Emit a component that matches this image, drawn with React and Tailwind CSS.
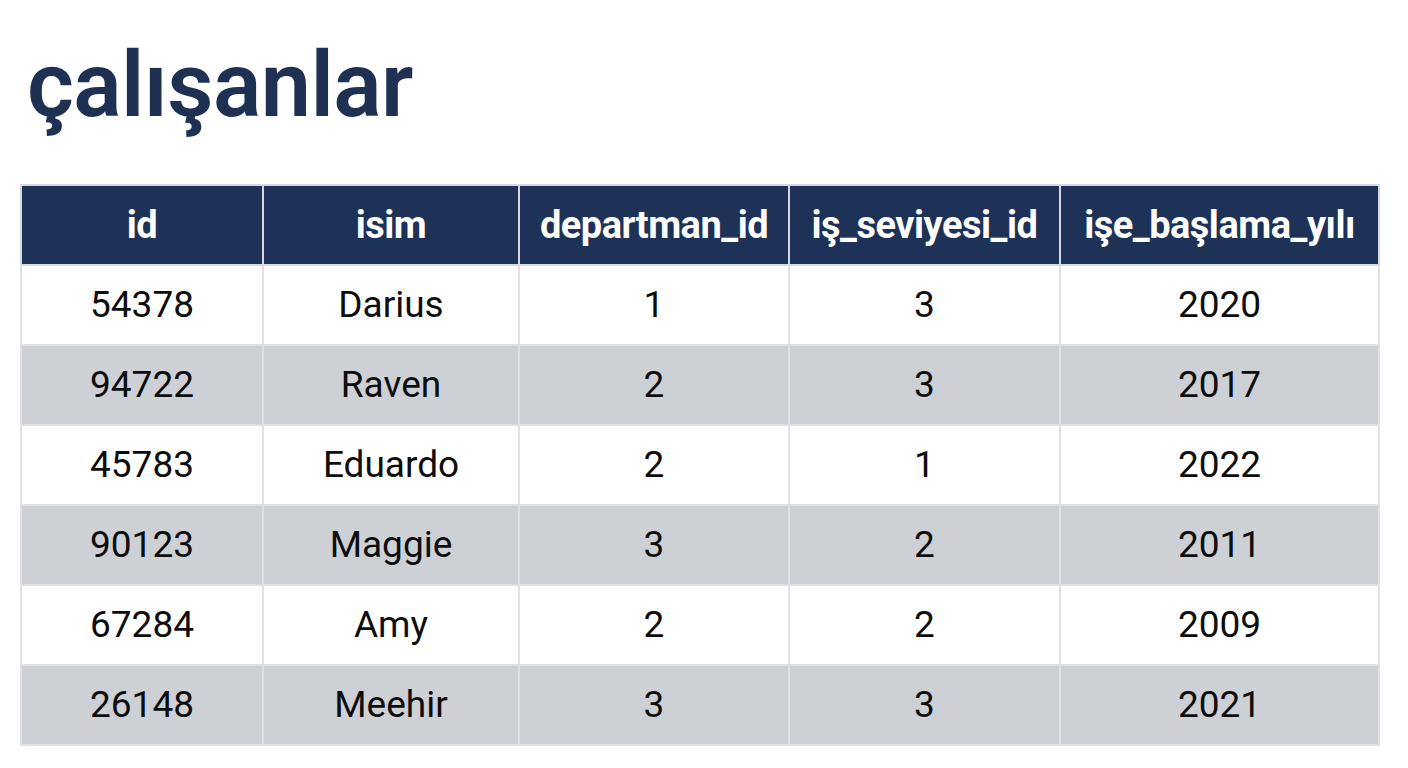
const columns = ["id", "isim", "departman_id", "iş_seviyesi_id", "işe_başlama_yılı"];

const rows = [
  ["54378", "Darius", "1", "3", "2020"],
  ["94722", "Raven", "2", "3", "2017"],
  ["45783", "Eduardo", "2", "1", "2022"],
  ["90123", "Maggie", "3", "2", "2011"],
  ["67284", "Amy", "2", "2", "2009"],
  ["26148", "Meehir", "3", "3", "2021"],
];

const widths = ["w-[242px]", "w-[256px]", "w-[270px]", "w-[271px]", "w-[319px]"];

export default function App() {
  return (
    <div
      className="w-[1408px] h-[768px] bg-white overflow-hidden"
      style={{ fontFamily: "Roboto, 'Liberation Sans', sans-serif" }}
    >
      <h1 className="pl-[27px] pt-[41px] h-[184px] text-[90px] leading-none font-semibold text-[#1f3152] tracking-[-0.6px]">
        çalışanlar
      </h1>

      <table className="ml-[20px] w-[1358px] table-fixed border-collapse">
        <thead>
          <tr className="h-[80px] bg-[#1e3257]">
            {columns.map((c, i) => (
              <th
                key={c}
                className={`${widths[i]} border-2 border-[#d5dae2] text-white text-[38px] font-bold tracking-[-0.5px] text-center`}
              >
                {c}
              </th>
            ))}
          </tr>
        </thead>
        <tbody>
          {rows.map((r, ri) => (
            <tr key={r[0]} className={`h-[80px] ${ri % 2 === 1 ? "bg-[#cdd0d4]" : "bg-white"}`}>
              {r.map((v, ci) => (
                <td
                  key={ci}
                  className="border-2 border-[#dfe1e5] text-center text-[37px] text-[#0d0d0d]"
                >
                  {v}
                </td>
              ))}
            </tr>
          ))}
        </tbody>
      </table>
    </div>
  );
}
